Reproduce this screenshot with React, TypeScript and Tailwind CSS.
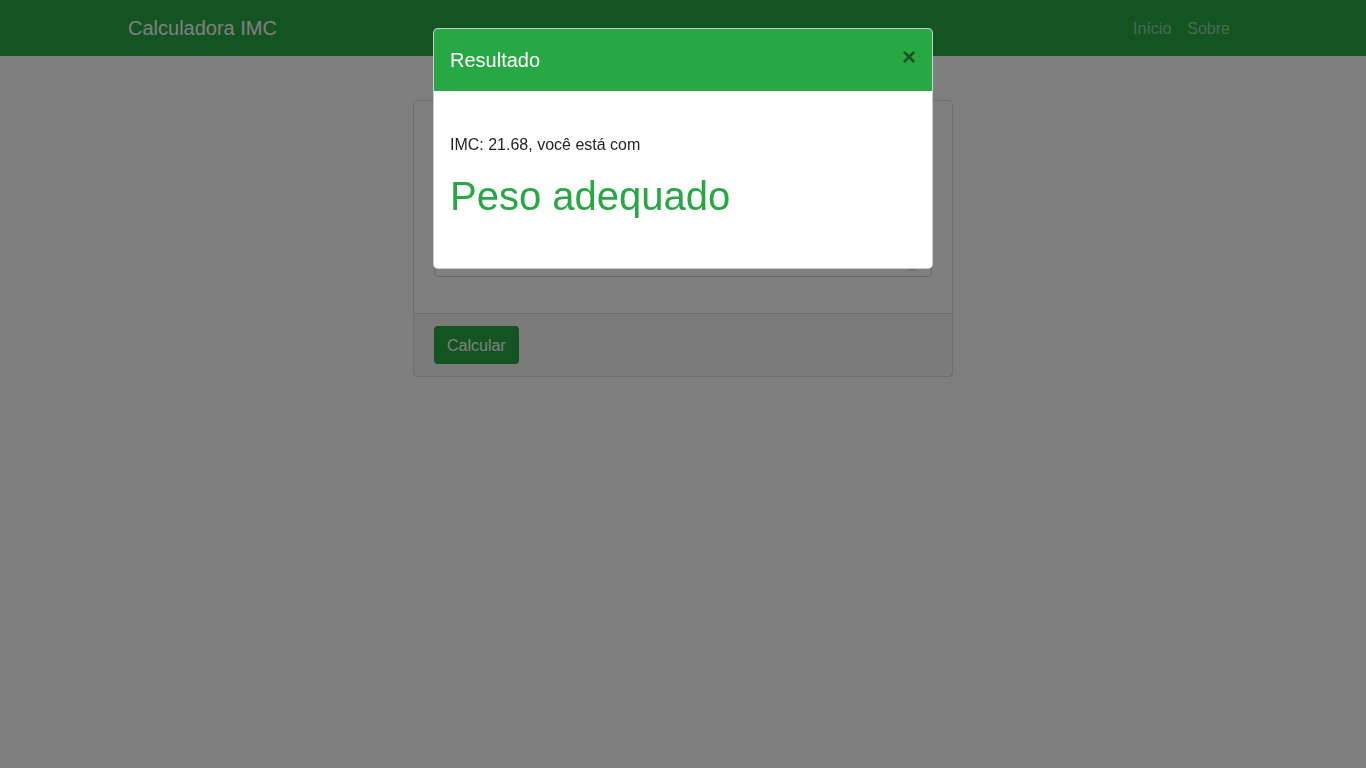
import React from 'react';

const App: React.FC = () => {
  return (
    <div className="min-h-[768px] bg-white font-['Liberation_Sans',Arial,sans-serif] text-[#212529] text-base leading-6">
      {/* Navbar */}
      <nav className="bg-[#28a745] h-14">
        <div className="max-w-[1140px] mx-auto px-[15px] h-full flex items-center justify-between">
          <span className="text-white text-xl leading-[30px]">Calculadora IMC</span>
          <div className="flex mt-0.5">
            <a className="px-2 text-white/50">Início</a>
            <a className="px-2 text-white/50">Sobre</a>
          </div>
        </div>
      </nav>

      {/* Form card */}
      <div className="max-w-[1140px] mx-auto px-[15px] mt-[44px]">
        <div className="w-[540px] ml-[285px] border border-black/[0.125] rounded">
          <div className="p-5">
            <div className="mb-4">
              <label className="block mb-2">Altura (m)</label>
              <div className="h-[38px] border border-[#ced4da] rounded" />
            </div>
            <div className="mb-4">
              <label className="block mb-2">Peso (kg)</label>
              <div className="h-[38px] border border-[#ced4da] rounded flex items-end justify-end pr-[13px] pb-[6px]">
                <div className="w-[12px] h-[10px] border border-[#ced4da] rounded-b" />
              </div>
            </div>
          </div>
          <div className="border-t border-black/[0.125] bg-black/[0.03] px-5 py-3">
            <button className="block bg-[#28a745] text-white rounded px-3 pt-[7px] pb-[5px] border border-transparent leading-6">
              Calcular
            </button>
          </div>
        </div>
      </div>

      {/* Modal */}
      <div className="fixed inset-0 bg-black/50">
        <div className="w-[500px] mx-auto mt-7 bg-white border border-black/20 rounded-[5px] overflow-hidden">
          <div className="bg-[#28a745] text-white p-4 flex items-start">
            <h5 className="text-xl leading-[30px]">Resultado</h5>
            <button className="ml-auto -m-4 p-4 text-2xl leading-none font-bold text-black opacity-50">×</button>
          </div>
          <div className="p-4">
            <div className="h-[26px]" />
            <p className="mb-4">IMC: 21.68, você está com</p>
            <h1 className="text-[40px] leading-[46px] text-[#28a745] mb-[10px]">Peso adequado</h1>
            <div className="h-[23px]" />
          </div>
        </div>
      </div>
    </div>
  );
};

export default App;
